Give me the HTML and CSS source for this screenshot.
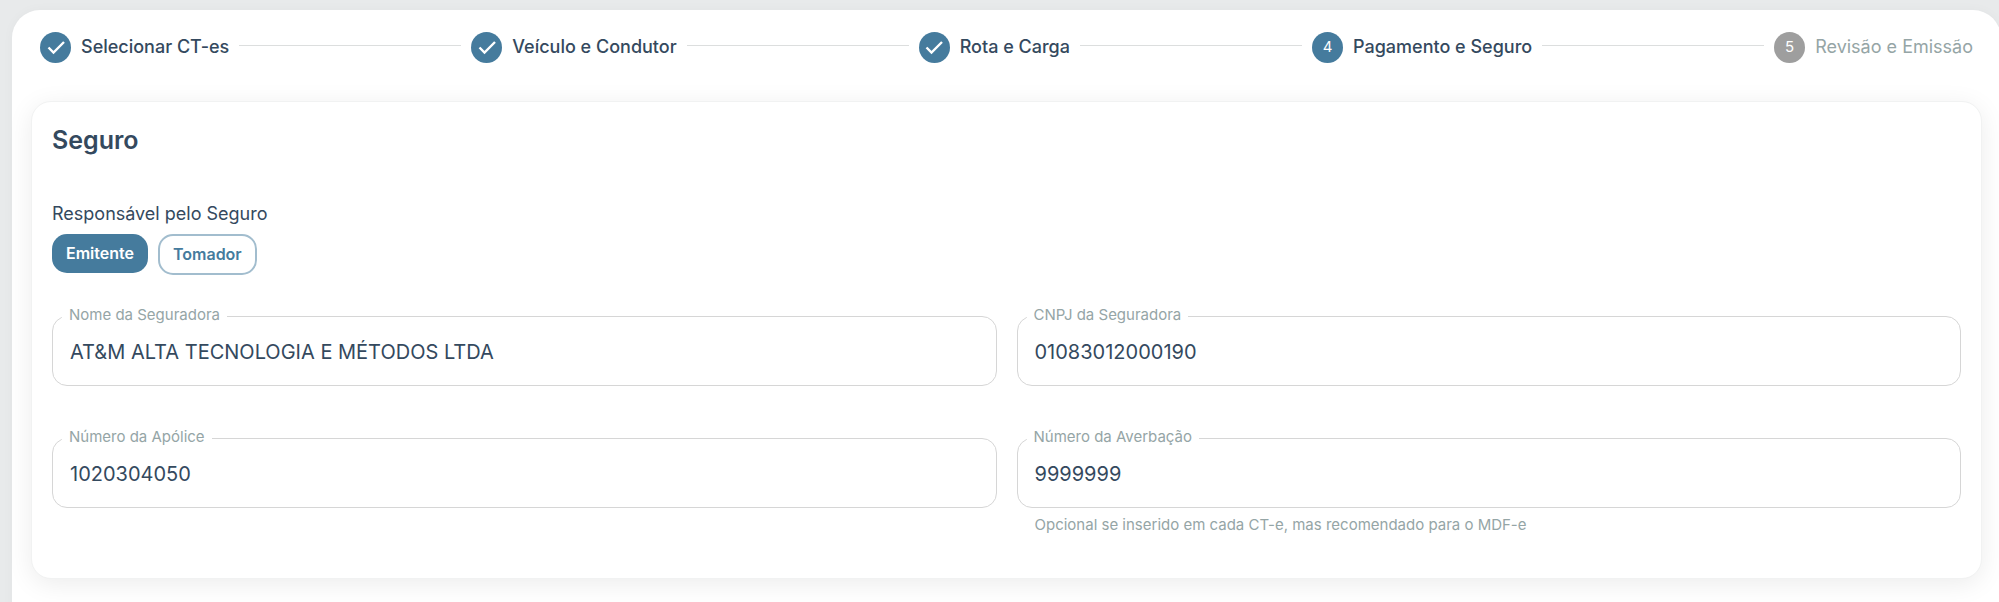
FILE: index.html
```html
<!DOCTYPE html>
<html lang="pt-BR">
<head>
<meta charset="utf-8">
<title>Pagamento e Seguro</title>
<link rel="stylesheet" href="styles.css">
</head>
<body>
<main class="panel">
  <ol class="stepper">
    <li class="step"><span class="step-dot"><svg class="check" viewBox="0 0 24 24" aria-hidden="true"><path d="M4.5 12.5l5 5L20 7"/></svg></span><span>Selecionar CT-es</span></li>
    <li class="step-line" aria-hidden="true"></li>
    <li class="step"><span class="step-dot"><svg class="check" viewBox="0 0 24 24" aria-hidden="true"><path d="M4.5 12.5l5 5L20 7"/></svg></span><span>Veículo e Condutor</span></li>
    <li class="step-line" aria-hidden="true"></li>
    <li class="step"><span class="step-dot"><svg class="check" viewBox="0 0 24 24" aria-hidden="true"><path d="M4.5 12.5l5 5L20 7"/></svg></span><span>Rota e Carga</span></li>
    <li class="step-line" aria-hidden="true"></li>
    <li class="step" aria-current="step"><span class="step-dot">4</span><span>Pagamento e Seguro</span></li>
    <li class="step-line" aria-hidden="true"></li>
    <li class="step step-pending"><span class="step-dot">5</span><span>Revisão e Emissão</span></li>
  </ol>
  <section class="card">
    <h2 class="card-title">Seguro</h2>
    <div class="choice" role="group" aria-labelledby="resp">
      <span class="choice-label" id="resp">Responsável pelo Seguro</span>
      <div class="choice-row">
        <button type="button" class="pill pill-on" aria-pressed="true">Emitente</button>
        <button type="button" class="pill" aria-pressed="false">Tomador</button>
      </div>
    </div>
    <form class="fields">
      <div class="field">
        <input class="field-input" id="nome" type="text" value="AT&amp;M ALTA TECNOLOGIA E MÉTODOS LTDA">
        <label class="field-label" for="nome">Nome da Seguradora</label>
      </div>
      <div class="field">
        <input class="field-input" id="cnpj" type="text" value="01083012000190">
        <label class="field-label" for="cnpj">CNPJ da Seguradora</label>
      </div>
      <div class="field">
        <input class="field-input" id="apolice" type="text" value="1020304050">
        <label class="field-label" for="apolice">Número da Apólice</label>
      </div>
      <div class="field">
        <input class="field-input" id="averbacao" type="text" value="9999999" aria-describedby="averbacao-hint">
        <label class="field-label" for="averbacao">Número da Averbação</label>
        <p class="field-hint" id="averbacao-hint">Opcional se inserido em cada CT-e, mas recomendado para o MDF-e</p>
      </div>
    </form>
  </section>
</main>
</body>
</html>
```
FILE: styles.css
```css
* { box-sizing: border-box; }
body {
  margin: 0;
  overflow: hidden;
  background: #e8eaeb;
  color: #34495e;
  font-family: Inter, sans-serif;
  font-size: 18px;
}
.panel {
  min-height: 100vh;
  margin: 10px -2px 0 12px;
  padding: 20px 19px;
  background: #fff;
  border-radius: 28px 28px 0 0;
  box-shadow: 0 0 12px rgba(0, 0, 0, 0.03);
}
.stepper {
  display: flex;
  align-items: center;
  gap: 10px;
  margin: 0 0 38px;
  padding: 1px 9px 0;
  list-style: none;
}
.step {
  display: flex;
  align-items: center;
  gap: 10px;
  color: #34495e;
  font-weight: 500;
  line-height: 32px;
  white-space: nowrap;
}
.step-pending { color: #95a5a6; font-weight: 400; }
.step-dot {
  display: flex;
  align-items: center;
  justify-content: center;
  width: 31px;
  height: 31px;
  border-radius: 50%;
  background: #457b9d;
  color: #fff;
  font-size: 15px;
  font-weight: 400;
}
.step-pending .step-dot { background: #9e9e9e; }
.check {
  width: 24px;
  height: 24px;
  fill: none;
  stroke: #fff;
  stroke-width: 2.4;
}
.step-line { flex: 1; height: 1px; margin-bottom: 4px; background: #dcdede; }
.card {
  padding: 20px 20px 70px;
  background: #fff;
  border: 1px solid #f1f2f2;
  border-radius: 20px;
  box-shadow: 0 5px 26px rgba(0, 0, 0, 0.08);
}
.card-title {
  margin: 0 0 40px;
  font-size: 25px;
  font-weight: 600;
  line-height: 36px;
}
.choice-label { display: block; line-height: 32px; }
.choice-row { display: flex; align-items: flex-start; gap: 10px; margin: 4px 0 41px; }
.pill {
  padding: 0 13px;
  border: 2px solid #a2bdce;
  border-radius: 15px;
  background: #fff;
  color: #457b9d;
  font: 600 16px/37px Inter, sans-serif;
}
.pill-on { padding: 0 14px; border: 0; background: #457b9d; color: #fff; line-height: 39px; }
.fields {
  display: grid;
  grid-template-columns: 1fr 1fr;
  gap: 52px 20px;
}
.field { position: relative; height: 70px; }
.field-input {
  width: 100%;
  height: 70px;
  padding: 2px 17px 0;
  border: 1px solid #d6d6d6;
  border-radius: 15px;
  background: #fff;
  color: #34495e;
  font: 400 20px/28px Inter, sans-serif;
}
.field-label {
  position: absolute;
  top: -10px;
  left: 10px;
  padding: 0 7px;
  background: #fff;
  color: #95a5a6;
  font-size: 15px;
  line-height: 18px;
}
.field-hint {
  margin: 5px 18px 0;
  color: #95a5a6;
  font-size: 15px;
  line-height: 24px;
}
```
